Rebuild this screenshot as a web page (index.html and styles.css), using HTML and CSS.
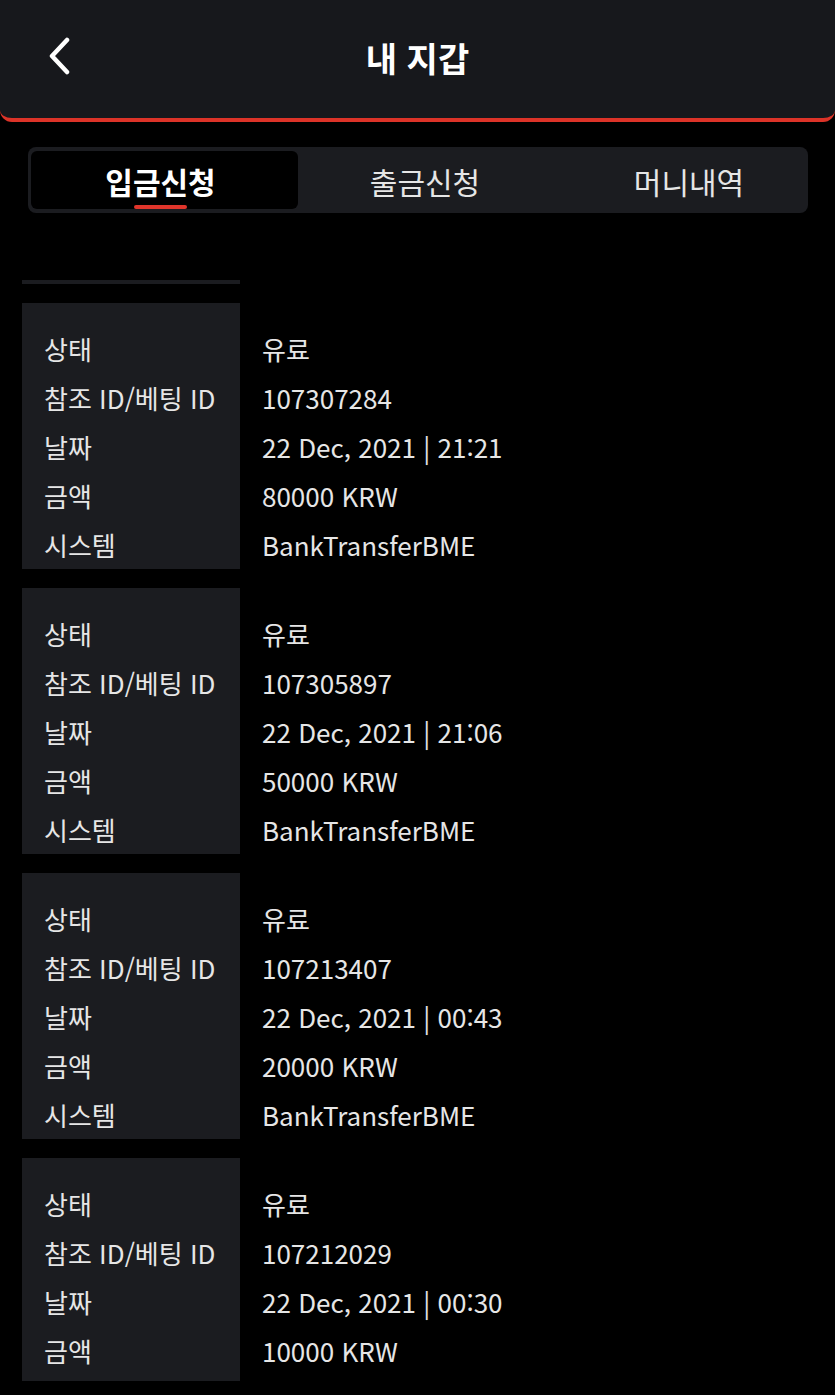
FILE: index.html
```html
<!DOCTYPE html>
<html lang="ko">
<head>
<meta charset="utf-8">
<title>내 지갑</title>
<link rel="stylesheet" href="styles.css">
</head>
<body>
<header class="topbar">
  <button class="back" aria-label="뒤로">
    <svg width="26" height="38" viewBox="0 0 26 38"><polyline points="20,3 5,19 20,35" fill="none" stroke="#fff" stroke-width="4.5" stroke-linecap="round" stroke-linejoin="round"/></svg>
  </button>
  <h1 class="title">내 지갑</h1>
</header>

<nav class="tabs">
  <div class="tab active"><span class="tab-label">입금신청</span><span class="tab-bar"></span></div>
  <div class="tab second"><span class="tab-label">출금신청</span></div>
  <div class="tab third"><span class="tab-label">머니내역</span></div>
</nav>

<main class="list">
  <div class="list-head"></div>

  <section class="card">
    <div class="labels"><div class="row">상태</div><div class="row">참조 ID/베팅 ID</div><div class="row">날짜</div><div class="row">금액</div><div class="row">시스템</div></div>
    <div class="values"><div class="row">유료</div><div class="row">107307284</div><div class="row">22 Dec, 2021 | 21:21</div><div class="row">80000 KRW</div><div class="row">BankTransferBME</div></div>
  </section>

  <section class="card">
    <div class="labels"><div class="row">상태</div><div class="row">참조 ID/베팅 ID</div><div class="row">날짜</div><div class="row">금액</div><div class="row">시스템</div></div>
    <div class="values"><div class="row">유료</div><div class="row">107305897</div><div class="row">22 Dec, 2021 | 21:06</div><div class="row">50000 KRW</div><div class="row">BankTransferBME</div></div>
  </section>

  <section class="card">
    <div class="labels"><div class="row">상태</div><div class="row">참조 ID/베팅 ID</div><div class="row">날짜</div><div class="row">금액</div><div class="row">시스템</div></div>
    <div class="values"><div class="row">유료</div><div class="row">107213407</div><div class="row">22 Dec, 2021 | 00:43</div><div class="row">20000 KRW</div><div class="row">BankTransferBME</div></div>
  </section>

  <section class="card last">
    <div class="labels"><div class="row">상태</div><div class="row">참조 ID/베팅 ID</div><div class="row">날짜</div><div class="row">금액</div></div>
    <div class="values"><div class="row">유료</div><div class="row">107212029</div><div class="row">22 Dec, 2021 | 00:30</div><div class="row">10000 KRW</div></div>
  </section>
</main>
</body>
</html>
```

FILE: styles.css
```css
* { box-sizing: border-box; }
html, body {
  margin: 0;
  padding: 0;
  background: #000;
  color: #e8e8e8;
  font-family: "Noto Sans CJK KR", "Noto Sans", sans-serif;
  overflow: hidden;
}
.topbar {
  height: 122px;
  background: #17181c;
  border-bottom: 4px solid #dc3328;
  border-radius: 0 0 12px 12px;
  display: flex;
  align-items: center;
  justify-content: center;
  position: relative;
  padding-bottom: 3px;
}
.back {
  position: absolute;
  left: 47px;
  top: 37px;
  background: none;
  border: 0;
  padding: 0;
  display: flex;
}
.title {
  margin: 0;
  font-size: 34px;
  font-weight: 700;
  color: #fff;
  line-height: 44px;
}
.tabs {
  margin: 25px 27px 0 28px;
  height: 66px;
  background: #1b1c20;
  border-radius: 8px;
  padding: 4px 3px;
  display: flex;
  overflow: hidden;
}
.tab {
  flex: none;
  display: flex;
  flex-direction: column;
  align-items: center;
  padding-top: 10px;
  border-radius: 6px;
}
.tab.active {
  background: #000;
  width: 267px;
  padding-right: 8px;
}
.tab.second { width: 254px; }
.tab.third { width: 274px; }
.tab-label {
  font-size: 30px;
  line-height: 40px;
  color: #e6e6e6;
}
.tab.active .tab-label { font-weight: 700; color: #fff; }
.tab-bar {
  margin-top: 4px;
  width: 53px;
  height: 4px;
  border-radius: 2px;
  background: #e0352b;
}
.list {
  margin-top: 67px;
  padding: 0 22px;
  display: flex;
  flex-direction: column;
  gap: 19px;
}
.list-head {
  width: 218px;
  height: 4px;
  background: #1b1c20;
}
.card {
  display: flex;
}
.labels {
  width: 218px;
  flex: none;
  background: #1b1c20;
  padding: 21px 0 0 22px;
}
.values {
  padding: 21px 0 0 22px;
}
.card.last .labels { padding-bottom: 6px; }
.row {
  font-size: 26px;
  line-height: 49px;
  height: 49px;
  white-space: nowrap;
  color: #e6e6e6;
}
```
